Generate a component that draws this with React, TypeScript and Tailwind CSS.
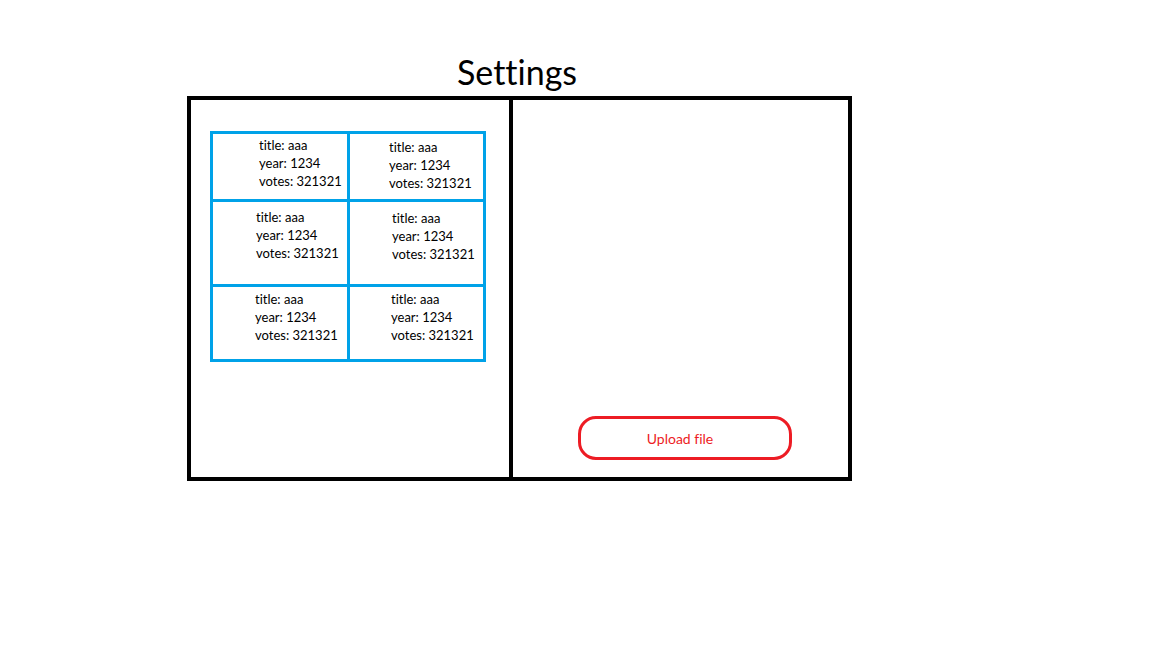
import React from 'react';

interface Movie {
  title: string;
  year: number;
  votes: number;
}

const movies: Movie[] = [
  { title: 'aaa', year: 1234, votes: 321321 },
  { title: 'aaa', year: 1234, votes: 321321 },
  { title: 'aaa', year: 1234, votes: 321321 },
  { title: 'aaa', year: 1234, votes: 321321 },
  { title: 'aaa', year: 1234, votes: 321321 },
  { title: 'aaa', year: 1234, votes: 321321 },
];

// each cell's text sits a little differently in the sketch
const cellPad = [
  'pl-[46px] pt-[2px]',
  'pl-[39px] pt-[4px]',
  'pl-[43px] pt-[6px]',
  'pl-[42px] pt-[7px]',
  'pl-[42px] pt-[3px]',
  'pl-[41px] pt-[3px]',
];

const MovieCell: React.FC<{ movie: Movie; pad: string }> = ({ movie, pad }) => (
  <div className={`bg-white text-[13px] leading-[18px] text-black ${pad}`}>
    <div>title: {movie.title}</div>
    <div>year: {movie.year}</div>
    <div>votes: {movie.votes}</div>
  </div>
);

const App: React.FC = () => {
  return (
    <div
      className="w-[1152px] h-[648px] bg-white pl-[187px] [font-variant-ligatures:none]"
      style={{ fontFamily: 'Lato, "Open Sans", sans-serif' }}
    >
      <div className="w-[660px] h-[96px] pt-[52px] text-center text-[34px] leading-[40px] text-black">
        Settings
      </div>

      <div className="w-[665px] h-[385px] border-4 border-black flex">
        <div className="w-[322px] border-r-4 border-black pl-[19px] pt-[31px]">
          <div className="w-[276px] h-[231px] grid grid-cols-[134px_133px] grid-rows-[65px_82px_72px] gap-[3px] p-[3px] bg-[#00a2e8]">
            {movies.map((movie, i) => (
              <MovieCell key={i} movie={movie} pad={cellPad[i]} />
            ))}
          </div>
        </div>

        <div className="flex-1 flex flex-col justify-end pl-[65px] pb-[17px]">
          <button className="w-[214px] h-[44px] pr-[10px] border-[3px] border-[#ed1c24] rounded-[18px] text-[14px] text-[#ed1c24] bg-white">
            Upload file
          </button>
        </div>
      </div>
    </div>
  );
};

export default App;
